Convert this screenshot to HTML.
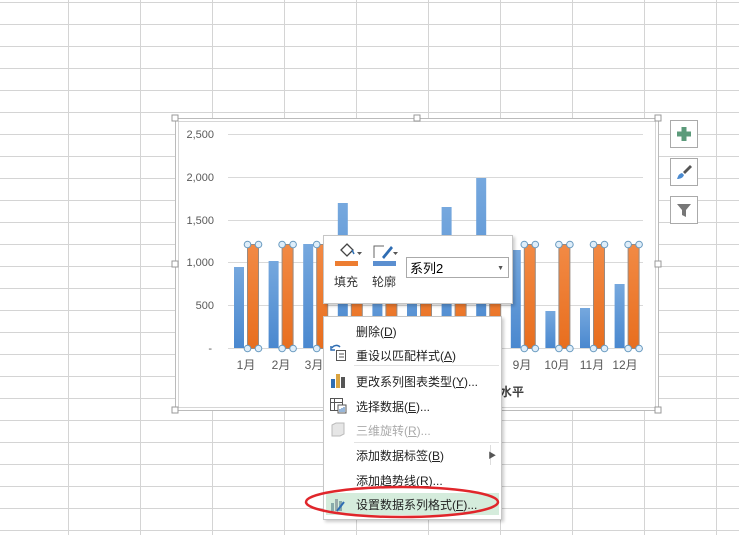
<!DOCTYPE html>
<html><head><meta charset="utf-8"><style>
body{margin:0;width:739px;height:535px;overflow:hidden;background:#fff;font-family:"Liberation Sans","Noto Sans CJK SC",sans-serif;position:relative}
.abs{position:absolute}
.menu{left:323px;top:316px;width:177px;height:202px;background:#fff;border:1px solid #c6c6c6;box-shadow:2px 2px 3px rgba(0,0,0,.2)}
.it{position:absolute;left:32px;font-size:12px;color:#222;white-space:nowrap}
.dis{color:#aaa}
.sep{position:absolute;left:30px;right:2px;height:1px;background:#e2e2e2}
.btn{width:26px;height:26px;border:1px solid #aaa;background:#fff}
</style></head><body>
<svg class="abs" style="left:0;top:0" width="739" height="535">
<g stroke="#d4d4d4" stroke-width="1">
<line x1="68.5" y1="0" x2="68.5" y2="535"/><line x1="140.5" y1="0" x2="140.5" y2="535"/><line x1="212.5" y1="0" x2="212.5" y2="535"/><line x1="284.5" y1="0" x2="284.5" y2="535"/><line x1="356.5" y1="0" x2="356.5" y2="535"/><line x1="428.5" y1="0" x2="428.5" y2="535"/><line x1="500.5" y1="0" x2="500.5" y2="535"/><line x1="572.5" y1="0" x2="572.5" y2="535"/><line x1="644.5" y1="0" x2="644.5" y2="535"/><line x1="716.5" y1="0" x2="716.5" y2="535"/>
<line x1="0" y1="2.5" x2="739" y2="2.5"/><line x1="0" y1="24.5" x2="739" y2="24.5"/><line x1="0" y1="46.5" x2="739" y2="46.5"/><line x1="0" y1="68.5" x2="739" y2="68.5"/><line x1="0" y1="90.5" x2="739" y2="90.5"/><line x1="0" y1="112.5" x2="739" y2="112.5"/><line x1="0" y1="134.5" x2="739" y2="134.5"/><line x1="0" y1="156.5" x2="739" y2="156.5"/><line x1="0" y1="178.5" x2="739" y2="178.5"/><line x1="0" y1="200.5" x2="739" y2="200.5"/><line x1="0" y1="222.5" x2="739" y2="222.5"/><line x1="0" y1="244.5" x2="739" y2="244.5"/><line x1="0" y1="266.5" x2="739" y2="266.5"/><line x1="0" y1="288.5" x2="739" y2="288.5"/><line x1="0" y1="310.5" x2="739" y2="310.5"/><line x1="0" y1="332.5" x2="739" y2="332.5"/><line x1="0" y1="354.5" x2="739" y2="354.5"/><line x1="0" y1="376.5" x2="739" y2="376.5"/><line x1="0" y1="398.5" x2="739" y2="398.5"/><line x1="0" y1="420.5" x2="739" y2="420.5"/><line x1="0" y1="442.5" x2="739" y2="442.5"/><line x1="0" y1="464.5" x2="739" y2="464.5"/><line x1="0" y1="486.5" x2="739" y2="486.5"/><line x1="0" y1="508.5" x2="739" y2="508.5"/><line x1="0" y1="530.5" x2="739" y2="530.5"/>
</g>
<rect x="175.5" y="118.5" width="483" height="292" fill="#fff" stroke="#bbb"/>
<rect x="178.5" y="121.5" width="477" height="286" fill="none" stroke="#d6d6d6"/>
<g fill="#fff" stroke="#999"><rect x="172" y="115" width="6" height="6"/><rect x="414" y="115" width="6" height="6"/><rect x="655" y="115" width="6" height="6"/><rect x="172" y="261" width="6" height="6"/><rect x="655" y="261" width="6" height="6"/><rect x="172" y="407" width="6" height="6"/><rect x="414" y="407" width="6" height="6"/><rect x="655" y="407" width="6" height="6"/></g>
<g stroke="#d9d9d9"><line x1="228" y1="134.5" x2="643" y2="134.5"/><line x1="228" y1="177.5" x2="643" y2="177.5"/><line x1="228" y1="220.5" x2="643" y2="220.5"/><line x1="228" y1="262.5" x2="643" y2="262.5"/><line x1="228" y1="305.5" x2="643" y2="305.5"/><line x1="228" y1="348.5" x2="643" y2="348.5"/></g>
<g font-size="11" fill="#595959" text-anchor="end"><text x="214" y="138">2,500</text><text x="214" y="181">2,000</text><text x="214" y="224">1,500</text><text x="214" y="266">1,000</text><text x="214" y="309">500</text><text x="212" y="352">-</text></g>
<defs><linearGradient id="b" x1="0" y1="0" x2="0" y2="1"><stop offset="0" stop-color="#76a8de"/><stop offset="1" stop-color="#4a88cf"/></linearGradient>
<linearGradient id="o" x1="0" y1="0" x2="0" y2="1"><stop offset="0" stop-color="#f28a45"/><stop offset="1" stop-color="#e86e1e"/></linearGradient></defs>
<g fill="url(#b)">
<rect x="234" y="267" width="10" height="81"/><rect x="268.6" y="261" width="10" height="87"/><rect x="303.2" y="244" width="10" height="104"/><rect x="337.8" y="203" width="10" height="145"/><rect x="372.4" y="262" width="10" height="86"/><rect x="407" y="254" width="10" height="94"/><rect x="441.6" y="207" width="10" height="141"/><rect x="476.2" y="178" width="10" height="170"/><rect x="510.8" y="250" width="10" height="98"/><rect x="545.4" y="311" width="10" height="37"/><rect x="580" y="308" width="10" height="40"/><rect x="614.6" y="284" width="10" height="64"/>
</g>
<g fill="url(#o)" stroke="#9a8a80" stroke-width="1">
<rect x="247.5" y="244.5" width="11" height="104"/><rect x="282.1" y="244.5" width="11" height="104"/><rect x="316.7" y="244.5" width="11" height="104"/><rect x="351.3" y="244.5" width="11" height="104"/><rect x="385.9" y="244.5" width="11" height="104"/><rect x="420.5" y="244.5" width="11" height="104"/><rect x="455.1" y="244.5" width="11" height="104"/><rect x="489.7" y="244.5" width="11" height="104"/><rect x="524.3" y="244.5" width="11" height="104"/><rect x="558.9" y="244.5" width="11" height="104"/><rect x="593.5" y="244.5" width="11" height="104"/><rect x="628.1" y="244.5" width="11" height="104"/>
</g>
<g fill="#dfeefa" stroke="#6a9bc0" stroke-width="1">
<circle cx="247.5" cy="244.5" r="3.3"/><circle cx="258.5" cy="244.5" r="3.3"/><circle cx="247.5" cy="348.5" r="3.3"/><circle cx="258.5" cy="348.5" r="3.3"/>
<circle cx="282.1" cy="244.5" r="3.3"/><circle cx="293.1" cy="244.5" r="3.3"/><circle cx="282.1" cy="348.5" r="3.3"/><circle cx="293.1" cy="348.5" r="3.3"/>
<circle cx="316.7" cy="244.5" r="3.3"/><circle cx="316.7" cy="348.5" r="3.3"/>
<circle cx="524.3" cy="244.5" r="3.3"/><circle cx="535.3" cy="244.5" r="3.3"/><circle cx="524.3" cy="348.5" r="3.3"/><circle cx="535.3" cy="348.5" r="3.3"/>
<circle cx="558.9" cy="244.5" r="3.3"/><circle cx="569.9" cy="244.5" r="3.3"/><circle cx="558.9" cy="348.5" r="3.3"/><circle cx="569.9" cy="348.5" r="3.3"/>
<circle cx="593.5" cy="244.5" r="3.3"/><circle cx="604.5" cy="244.5" r="3.3"/><circle cx="593.5" cy="348.5" r="3.3"/><circle cx="604.5" cy="348.5" r="3.3"/>
<circle cx="628.1" cy="244.5" r="3.3"/><circle cx="639.1" cy="244.5" r="3.3"/><circle cx="628.1" cy="348.5" r="3.3"/><circle cx="639.1" cy="348.5" r="3.3"/>
</g>
<g font-size="12" fill="#595959" text-anchor="middle"><text x="246" y="369">1月</text><text x="281" y="369">2月</text><text x="314" y="369">3月</text><text x="522" y="369">9月</text><text x="557" y="369">10月</text><text x="592" y="369">11月</text><text x="625" y="369">12月</text></g>
<text x="500" y="396" font-size="12" font-weight="bold" fill="#404040">水平</text>
</svg>

<div class="abs btn" style="left:670px;top:120px"><svg width="26" height="26"><path d="M10.5 6h5v4.5H20v5h-4.5V20h-5v-4.5H6v-5h4.5z" fill="#5b9a7a"/></svg></div>
<div class="abs btn" style="left:670px;top:158px"><svg width="26" height="26"><path d="M19 6l2 2-7 7-2-2z" fill="#555"/><path d="M11 14l2 2c-1 3-4 4-7 4 1-2 1-5 5-6z" fill="#4a8ad0"/></svg></div>
<div class="abs btn" style="left:670px;top:196px"><svg width="26" height="26"><path d="M6 7h14l-5 6v7l-4-2v-5z" fill="#777"/></svg></div>

<div class="abs" style="left:323px;top:235px;width:188px;height:67px;background:#fff;border:1px solid #c6c6c6;box-shadow:2px 2px 3px rgba(0,0,0,.2)">
<svg class="abs" style="left:8px;top:4px" width="70" height="30">
<path d="M9 10l6-6 6 6-6 6z" fill="none" stroke="#444" stroke-width="1.3"/><path d="M15 4l3 3" stroke="#444"/><path d="M20 10l2 4" stroke="#2c6fb5" stroke-width="1.5"/><path d="M25 12h5l-2.5 3z" fill="#555"/>
<rect x="3" y="21" width="23" height="5" fill="#ed7d31"/>
<path d="M43 4h-2v-?" fill="none"/><path d="M42 18V6h10" fill="none" stroke="#666"/><path d="M50 17l9-11 2 2-9 11z" fill="#2f6db3"/><path d="M61 12h5l-2.5 3z" fill="#555"/>
<rect x="41" y="21" width="23" height="5" fill="#5b8fd0"/>
</svg>
<div class="abs" style="left:10px;top:37px;font-size:12px;color:#333">填充</div>
<div class="abs" style="left:48px;top:37px;font-size:12px;color:#333">轮廓</div>
<div class="abs" style="left:82px;top:21px;width:101px;height:21px;border:1px solid #aaa;font-size:13px;line-height:21px;padding-left:3px;box-sizing:border-box;width:103px">系列2<span style="position:absolute;right:4px;top:0;font-size:7px;color:#555">▼</span></div>
</div>

<div class="abs menu">
<div class="it" style="top:6px">删除(<u>D</u>)</div>
<svg class="abs" style="left:5px;top:27px" width="18" height="18"><path d="M3 4a5 5 0 0 1 8-1" fill="none" stroke="#2f6db3" stroke-width="1.5"/><path d="M2 2v4h4" fill="none" stroke="#2f6db3" stroke-width="1.5"/><rect x="7.5" y="6.5" width="9" height="10" fill="#fff" stroke="#555"/><path d="M10 10h5M10 13h5" stroke="#555"/></svg>
<div class="it" style="top:30px">重设以匹配样式(<u>A</u>)</div>
<div class="sep" style="top:48px"></div>
<svg class="abs" style="left:5px;top:55px" width="18" height="16"><rect x="2" y="7" width="4" height="9" fill="#2f6db3"/><rect x="7" y="2" width="4" height="14" fill="#d9a441"/><rect x="12" y="5" width="4" height="11" fill="#555"/></svg>
<div class="it" style="top:56px">更改系列图表类型(<u>Y</u>)...</div>
<svg class="abs" style="left:5px;top:80px" width="18" height="17"><rect x="1.5" y="1.5" width="12" height="12" fill="#fff" stroke="#555"/><path d="M1.5 5.5h12M5.5 1.5v12" stroke="#555"/><rect x="9" y="8" width="8" height="8" fill="#fff" stroke="#555"/><path d="M11 15v-3M13 15v-4M15 15v-5" stroke="#2f6db3"/></svg>
<div class="it" style="top:81px">选择数据(<u>E</u>)...</div>
<svg class="abs" style="left:5px;top:104px" width="18" height="17"><path d="M3 4l4-2h8v11l-4 2H3z" fill="#e6e6e6" stroke="#bbb"/></svg>
<div class="it dis" style="top:105px">三维旋转(<u>R</u>)...</div>
<div class="sep" style="top:125px"></div>
<div class="it" style="top:130px">添加数据标签(<u>B</u>)</div>
<div class="abs" style="left:166px;top:128px;width:1px;height:20px;background:#ddd"></div>
<div class="abs" style="left:161px;top:128px;font-size:8px;color:#555;left:162px"><span style="position:absolute;left:0;top:5px">&nbsp;▶</span></div>
<div class="it" style="top:155px">添加趋势线(<u>R</u>)...</div>
<div class="abs" style="left:2px;top:176px;width:173px;height:22px;background:#d5ecdc"></div>
<svg class="abs" style="left:5px;top:178px" width="18" height="18"><rect x="2" y="8" width="3" height="8" fill="#8aa"/><rect x="6" y="4" width="3" height="12" fill="#9aa"/><rect x="10" y="6" width="3" height="10" fill="#8aa"/><path d="M8 16l7-9" stroke="#2f6db3" stroke-width="2"/></svg>
<div class="it" style="top:179px">设置数据系列格式(<u>F</u>)...</div>
</div>
<svg class="abs" style="left:300px;top:480px" width="210" height="45"><ellipse cx="102" cy="22" rx="96" ry="15" fill="none" stroke="#e0262b" stroke-width="2.5"/></svg>
</body></html>
